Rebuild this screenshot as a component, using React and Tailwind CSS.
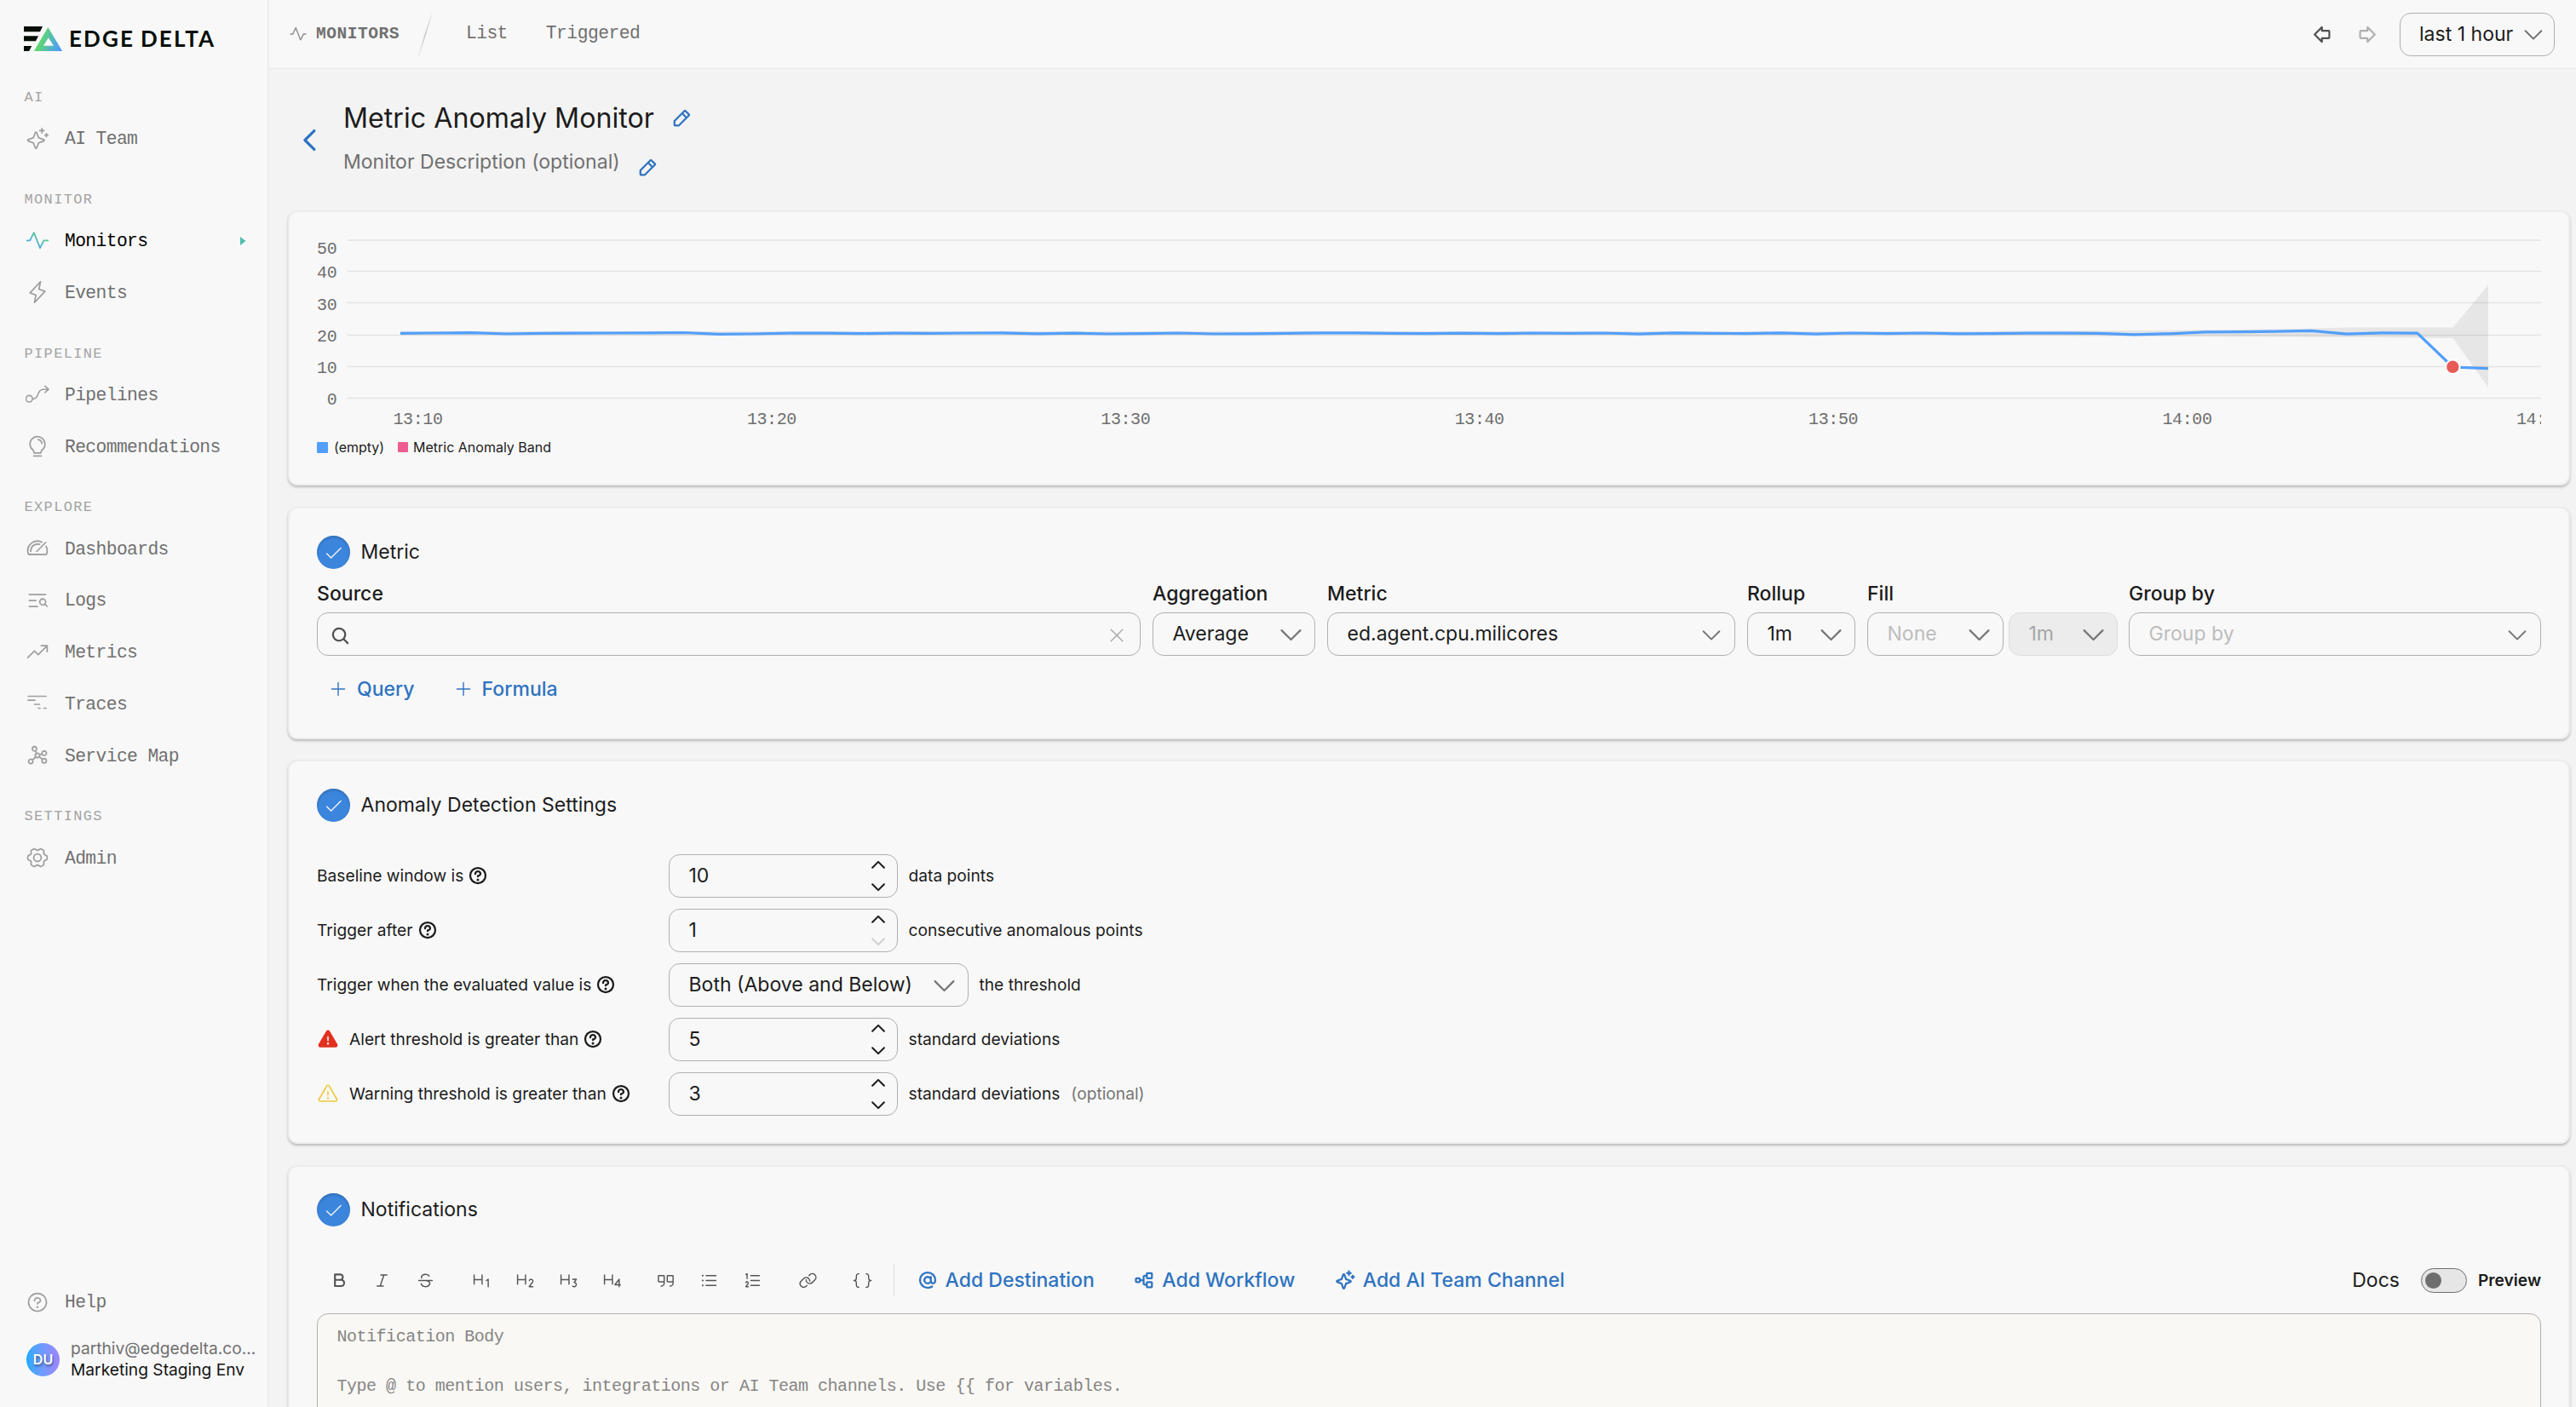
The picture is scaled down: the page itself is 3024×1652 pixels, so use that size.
import {
  PiArrowFatLeftBold,
  PiArrowFatRightBold,
  PiAtBold,
  PiBracketsCurly,
  PiCaretDown,
  PiCaretDownBold,
  PiCaretLeftBold,
  PiCaretUpBold,
  PiCheck,
  PiGearSix,
  PiGraph,
  PiLightbulb,
  PiLightning,
  PiLink,
  PiListBullets,
  PiListMagnifyingGlass,
  PiListNumbers,
  PiMagnifyingGlassBold,
  PiPencilSimpleBold,
  PiPlus,
  PiPulse,
  PiQuestion,
  PiQuestionBold,
  PiQuotes,
  PiSparkle,
  PiSparkleBold,
  PiSpeedometer,
  PiTextBBold,
  PiTextHFour,
  PiTextHOne,
  PiTextHThree,
  PiTextHTwo,
  PiTextItalic,
  PiTextStrikethrough,
  PiTreeStructureBold,
  PiTrendUp,
  PiWarning,
  PiWarningFill,
  PiX,
} from "react-icons/pi";

function PipelineIcon({ size, className }) {
  return (
    <svg
      width={size}
      height={size}
      viewBox="0 0 28 28"
      fill="none"
      stroke="currentColor"
      strokeWidth="1.6"
      strokeLinecap="round"
      strokeLinejoin="round"
      className={className}
    >
      <circle cx="4.3" cy="19.2" r="3.8" />
      <path d="M8.1 19.2h1.4c6.5 0 3.5-11 11-11h6" />
      <path d="m22.8 4.4 4.2 3.8-4.2 3.8" />
    </svg>
  );
}

function TracesIcon({ size, className }) {
  return (
    <svg
      width={size}
      height={size}
      viewBox="0 0 28 28"
      fill="none"
      stroke="currentColor"
      strokeWidth="1.7"
      strokeLinecap="round"
      className={className}
    >
      <path d="M3 5.5h21M3 10.2h8M10.5 15h6M15 19.5h2M21.5 19.5h2.5" />
    </svg>
  );
}

const NAV = [
  { title: "AI", items: [{ label: "AI Team", icon: PiSparkle }] },
  {
    title: "MONITOR",
    items: [
      { label: "Monitors", icon: PiPulse, active: true },
      { label: "Events", icon: PiLightning },
    ],
  },
  {
    title: "PIPELINE",
    items: [
      { label: "Pipelines", icon: PipelineIcon },
      { label: "Recommendations", icon: PiLightbulb },
    ],
  },
  {
    title: "EXPLORE",
    items: [
      { label: "Dashboards", icon: PiSpeedometer },
      { label: "Logs", icon: PiListMagnifyingGlass },
      { label: "Metrics", icon: PiTrendUp },
      { label: "Traces", icon: TracesIcon },
      { label: "Service Map", icon: PiGraph },
    ],
  },
  { title: "SETTINGS", items: [{ label: "Admin", icon: PiGearSix }] },
];

function Logo() {
  return (
    <div className="flex items-center h-[30px] pl-7 mt-[30px]">
      <svg width="45" height="29" viewBox="0 0 45 29">
        <defs>
          <linearGradient id="logo" x1="0" y1="0.7" x2="1" y2="1">
            <stop offset="0.1" stopColor="#5fdc68" />
            <stop offset="0.9" stopColor="#4a9bff" />
          </linearGradient>
        </defs>
        <path
          d="M0 0h22l-3 6.3H0zM0 11.3h17l-3 6H0zM0 23h9.2L6.2 29H0z"
          fill="#050f08"
        />
        <path
          d="M28.4 1 45.2 29H11.8zM28.8 13.2 23 22.8h12z"
          fill="url(#logo)"
          fillRule="evenodd"
        />
      </svg>
      <div className="flex gap-[7px] pl-2 font-['Lato',sans-serif] font-bold text-[26px] leading-none tracking-[2.1px] text-[#050f08]">
        <span>EDGE</span>
        <span>DELTA</span>
      </div>
    </div>
  );
}

function NavItem({ label, icon: Icon, active }) {
  return (
    <div className="flex items-center h-[60.75px] pl-[30px]">
      {active ? (
        <svg width="28" height="28" viewBox="0 0 28 28" fill="none">
          <defs>
            <linearGradient id="pulse" x1="0" y1="1" x2="1" y2="0">
              <stop offset="0.2" stopColor="#4aa6f0" />
              <stop offset="0.8" stopColor="#58cf86" />
            </linearGradient>
          </defs>
          <path
            d="M1.8 13.4h3.4l4.6-9.2 7.2 18 4.4-8.8h4.8"
            stroke="url(#pulse)"
            strokeWidth="1.8"
            strokeLinecap="round"
            strokeLinejoin="round"
          />
        </svg>
      ) : (
        <Icon size={28} className="text-[#9e9e9e]" />
      )}
      <span
        className={`pl-[18px] pt-[3px] flex-1 text-[21.3px] tracking-[-0.6px] ${
          active ? "text-black" : "text-[#707070]"
        }`}
      >
        {label}
      </span>
      {active && (
        <svg width="7" height="10" viewBox="0 0 7 10" className="mr-[25px]">
          <path d="M0 0 6.5 5 0 10z" fill="#4fbfae" />
        </svg>
      )}
    </div>
  );
}

function Sidebar() {
  return (
    <aside className="w-[316px] shrink-0 flex flex-col border-r-2 border-[#ececec] font-['Liberation_Mono',monospace]">
      <Logo />
      <nav className="mt-[13px]">
        {NAV.map((group) => (
          <div key={group.title}>
            <div className="h-[59.25px] pt-[24px] pl-[28.5px] flex items-center text-[17px] tracking-[1.35px] text-[#a3a3a3]">
              {group.title}
            </div>
            {group.items.map((item) => (
              <NavItem key={item.label} {...item} />
            ))}
          </div>
        ))}
      </nav>
      <div className="mt-auto">
        <NavItem label="Help" icon={PiQuestion} />
        <div className="flex items-center gap-[13px] pl-[31px] h-[52px] mt-[11px] mb-[30px] font-['Inter',sans-serif]">
          <div className="size-[39px] rounded-full bg-linear-to-r from-[#0fabff] to-[#9a86ff] flex items-center justify-center text-white text-[16px] font-semibold [text-shadow:1px_2px_3px_rgba(0,0,0,0.45)]">
            DU
          </div>
          <div className="text-[19.2px] leading-[25px]">
            <div className="text-[#707070]">parthiv@edgedelta.co...</div>
            <div className="text-[#141414]">Marketing Staging Env</div>
          </div>
        </div>
      </div>
    </aside>
  );
}

function Header() {
  return (
    <header className="h-[81px] shrink-0 flex items-center border-b border-[#e9e9e9] bg-[#f8f8f8] pl-[23px] pr-[26px] font-['Liberation_Mono',monospace] text-[#707070]">
      <PiPulse size={22} className="text-[#8a8a8a]" />
      <span className="pl-[10px] pt-[2px] text-[19.6px] font-bold tracking-[0.5px]">
        MONITORS
      </span>
      <svg width="20" height="54" viewBox="0 0 20 54" className="ml-[20px]">
        <defs>
          <linearGradient id="slash" x1="0" y1="0" x2="0" y2="1">
            <stop offset="0" stopColor="#c4c4c4" stopOpacity="0.1" />
            <stop offset="0.5" stopColor="#c4c4c4" />
            <stop offset="1" stopColor="#c4c4c4" stopOpacity="0.1" />
          </linearGradient>
        </defs>
        <path d="M17.5 2h1.6L3.1 53H1.5z" fill="url(#slash)" />
      </svg>
      <span className="pl-[38px] text-[21.3px] tracking-[-0.6px]">List</span>
      <span className="pl-[45px] text-[21.3px] tracking-[-0.5px]">
        Triggered
      </span>
      <div className="ml-auto flex items-center">
        <PiArrowFatLeftBold size={23} className="text-[#505050]" />
        <PiArrowFatRightBold size={23} className="ml-[29px] text-[#b0b0b0]" />
        <div className="ml-[27px] w-[182px] h-[51px] rounded-[13px] border border-[#b0b0b0] flex items-center justify-between pl-[22px] pr-[9px] font-['Inter',sans-serif]">
          <span className="text-[23.04px] text-[#1c1c1c]">last 1 hour</span>
          <PiCaretDown size={30} />
        </div>
      </div>
    </header>
  );
}

function Card({ className, children }) {
  return (
    <section
      className={`shrink-0 rounded-[11px] border-2 border-[#ededed] bg-[#f8f8f8] px-8 shadow-[0_2px_3px_rgba(0,0,0,0.24)] ${className}`}
    >
      {children}
    </section>
  );
}

const Y_TICKS = [
  { value: 50, y: 16, label: 25.5 },
  { value: 40, y: 52.5, label: 53.5 },
  { value: 30, y: 89.5, label: 90.7 },
  { value: 20, y: 127.5, label: 128.4 },
  { value: 10, y: 164.5, label: 165.3 },
  { value: 0, y: 201.5, label: 202.5 },
];

const X_TICKS = ["13:10", "13:20", "13:30", "13:40", "13:50", "14:00", "14:10"];

// one point per minute, starting at 13:09:30
const SERIES = [
  125.3, 125, 124.7, 126, 125.4, 125.2, 125, 124.8, 124.5, 126.4, 126, 125.1,
  125.2, 125.6, 125.2, 125.4, 125, 124.9, 125.8, 125.2, 126, 125.6, 125, 126,
  125.8, 125.4, 124.8, 124.9, 125.4, 125.7, 125.2, 125.7, 125, 125.4, 125,
  126.2, 124.8, 125.3, 125.6, 124.9, 126.2, 125, 125.7, 125, 125.8, 125.6,
  125.1, 125.2, 125.3, 126.8, 125.8, 123.9, 123.7, 123.1, 122.4, 126.2, 124.9,
  125.2, 165, 166.7,
];

function Chart() {
  const px = (i) => 98 + i * 41.54;
  const line = SERIES.map((y, i) => `${px(i)},${y}`).join(" ");
  return (
    <svg
      width="2611"
      height="240"
      viewBox="0 0 2611 240"
      className="block font-['Liberation_Mono',monospace] text-[20px] tracking-[-0.4px]"
    >
      {Y_TICKS.map((tick) => (
        <g key={tick.value}>
          <path d={`M35.5 ${tick.y}H2611`} stroke="#e4e4e4" strokeWidth="1.6" />
          <text x="23.3" y={tick.label + 6.8} textAnchor="end" fill="#6e6e6e">
            {tick.value}
          </text>
        </g>
      ))}
      {X_TICKS.map((label, i) => (
        <text
          key={label}
          x={118.5 + i * 415.4}
          y="232"
          textAnchor="middle"
          fill="#6e6e6e"
        >
          {label}
        </text>
      ))}
      <path
        d="M98 123 1900 123 2130 122 2300 120.5 2383 118.6 2507.5 118.4 2549 68.5V189L2507.5 131 2383 130 2130 128.7 1900 127.5 98 127.5z"
        fill="#000"
        fillOpacity="0.07"
      />
      <polyline
        points={line}
        fill="none"
        stroke="#529ffb"
        strokeWidth="3.2"
        strokeLinejoin="round"
      />
      <circle
        cx={px(58)}
        cy="164.8"
        r="8.2"
        fill="#e95b56"
        stroke="#fff"
        strokeWidth="2"
      />
    </svg>
  );
}

function ChartCard() {
  return (
    <Card className="h-[323px] pt-[17px]">
      <Chart />
      <div className="flex items-center text-[16px] leading-[20px] mt-[9px]">
        <span className="size-[13px] rounded-[1px] bg-[#529ffb]" />
        <span className="pl-[7px] w-[82px]">(empty)</span>
        <span className="size-[12px] rounded-[1px] bg-[#ee5d92]" />
        <span className="pl-[6px]">Metric Anomaly Band</span>
      </div>
    </Card>
  );
}

function SectionTitle({ children }) {
  return (
    <div className="flex items-center gap-[12.5px] h-[39px] text-[23.04px]">
      <span className="size-[39px] rounded-full bg-[#3b85dc] shadow-[inset_0_2px_3px_rgba(0,0,0,0.18)] flex items-center justify-center text-[#f2f2f2]">
        <PiCheck size={23} />
      </span>
      {children}
    </div>
  );
}

function Select({ value, placeholder, disabled, caret = 35, className }) {
  return (
    <div
      className={`h-[51px] rounded-[13px] border flex items-center justify-between pl-[22.5px] text-[23.04px] ${
        caret === 35 ? "pr-[10px]" : "pr-[12px]"
      } ${
        disabled
          ? "border-[#dedede] bg-[#ececec] text-[#a6a6a6]"
          : "border-[#b0b0b0]"
      } ${className}`}
    >
      {value || <span className="text-[#bdbdbd]">{placeholder}</span>}
      <PiCaretDown size={caret} className="text-[#757575]" />
    </div>
  );
}

function Field({ label, className, children }) {
  return (
    <div className={className}>
      <div className="text-[23.04px] leading-[28px] font-medium mb-[8px]">
        {label}
      </div>
      {children}
    </div>
  );
}

function AddButton({ className, children }) {
  return (
    <button
      className={`flex items-center gap-[11px] text-[23.04px] leading-[34px] font-medium text-[#2f73c0] ${className}`}
    >
      <PiPlus size={22} />
      {children}
    </button>
  );
}

function MetricCard() {
  return (
    <Card className="mt-[25px] h-[273px] pt-[32px]">
      <SectionTitle>Metric</SectionTitle>
      <div className="flex gap-[14px] mt-[15px]">
        <Field label="Source" className="w-[967px]">
          <div className="h-[51px] rounded-[13px] border border-[#b0b0b0] flex items-center justify-between pl-[15px] pr-[15px]">
            <PiMagnifyingGlassBold size={23} className="text-[#505050] mt-[3px]" />
            <PiX size={24} className="text-[#ababab] mt-[3px]" />
          </div>
        </Field>
        <Field label="Aggregation" className="w-[191px]">
          <Select value="Average" />
        </Field>
        <Field label="Metric" className="w-[479px]">
          <Select value="ed.agent.cpu.milicores" caret={30} />
        </Field>
        <Field label="Rollup" className="w-[127px]">
          <Select value="1m" />
        </Field>
        <Field label="Fill">
          <div className="flex gap-[6px]">
            <Select placeholder="None" className="w-[160px]" />
            <Select value="1m" disabled className="w-[128px]" />
          </div>
        </Field>
        <Field label="Group by" className="flex-1 -ml-px">
          <Select placeholder="Group by" caret={30} />
        </Field>
      </div>
      <div className="flex mt-[22px] pl-[14px]">
        <AddButton>Query</AddButton>
        <AddButton className="ml-[46px]">Formula</AddButton>
      </div>
    </Card>
  );
}

function Stepper({ value, atMin }) {
  return (
    <div className="w-[269px] h-[51px] rounded-[13px] border border-[#b0b0b0] flex items-center justify-between pl-[22.5px] pr-[11px] text-[23.04px]">
      {value}
      <div className="flex flex-col gap-[3px]">
        <PiCaretUpBold size={22} />
        <PiCaretDownBold size={22} className={atMin ? "text-[#cfcfcf]" : ""} />
      </div>
    </div>
  );
}

const SETTINGS = [
  { label: "Baseline window is", value: "10", unit: "data points" },
  {
    label: "Trigger after",
    value: "1",
    atMin: true,
    unit: "consecutive anomalous points",
  },
  {
    label: "Trigger when the evaluated value is",
    select: "Both (Above and Below)",
    unit: "the threshold",
  },
  {
    label: "Alert threshold is greater than",
    icon: <PiWarningFill size={26} className="text-[#e2311f]" />,
    value: "5",
    unit: "standard deviations",
  },
  {
    label: "Warning threshold is greater than",
    icon: <PiWarning size={26} className="text-[#ecc93c]" />,
    value: "3",
    unit: "standard deviations",
    optional: true,
  },
];

function AnomalyCard() {
  return (
    <Card className="mt-[24px] h-[451px] pt-[32px]">
      <SectionTitle>Anomaly Detection Settings</SectionTitle>
      <div className="flex flex-col gap-[13px] mt-[38px] text-[19.2px]">
        {SETTINGS.map((row) => (
          <div key={row.label} className="flex items-center h-[51px]">
            <div className="w-[413px] flex items-center">
              {row.icon && <span className="w-[38px]">{row.icon}</span>}
              {row.label}
              <PiQuestionBold size={24} className="ml-[5px]" />
            </div>
            {row.select ? (
              <Select value={row.select} className="w-[352px]" />
            ) : (
              <Stepper value={row.value} atMin={row.atMin} />
            )}
            <span className="pl-[12.5px]">{row.unit}</span>
            {row.optional && (
              <span className="pl-[13px] text-[#757575]">(optional)</span>
            )}
          </div>
        ))}
      </div>
    </Card>
  );
}

const TOOLS = [
  [PiTextBBold, PiTextItalic, PiTextStrikethrough],
  [PiTextHOne, PiTextHTwo, PiTextHThree, PiTextHFour],
  [PiQuotes, PiListBullets, PiListNumbers],
  [PiLink],
  [PiBracketsCurly],
];

const ACTIONS = [
  { label: "Add Destination", icon: PiAtBold },
  { label: "Add Workflow", icon: PiTreeStructureBold },
  { label: "Add AI Team Channel", icon: PiSparkleBold },
];

function NotificationsCard() {
  return (
    <Card className="mt-[25px] h-[400px] pt-[31px]">
      <SectionTitle>Notifications</SectionTitle>
      <div className="flex items-center h-[38px] mt-[44px]">
        <div className="flex gap-[13.5px] text-[#555]">
          {TOOLS.map((group, i) => (
            <div key={i} className="flex">
              {group.map((Icon, j) => (
                <span key={j} className="w-[51px] flex justify-center">
                  <Icon size={23} />
                </span>
              ))}
            </div>
          ))}
        </div>
        <div className="w-px h-[38px] ml-[11px] bg-[#dedede]" />
        <div className="flex gap-[47px] pl-[27px] text-[23.04px] font-medium text-[#2f73c0]">
          {ACTIONS.map(({ label, icon: Icon }) => (
            <button key={label} className="flex items-center gap-[8.5px]">
              <Icon size={24} />
              {label}
            </button>
          ))}
        </div>
        <div className="ml-auto flex items-center">
          <span className="text-[23.04px]">Docs</span>
          <span className="ml-[25px] w-[54px] h-[29px] rounded-full border border-[#6e6e6e] bg-[#e6e6e6] flex items-center pl-[4px]">
            <span className="size-[19px] rounded-full bg-[#6e6e6e]" />
          </span>
          <span className="pl-[13px] text-[19.2px] font-semibold">Preview</span>
        </div>
      </div>
      <div className="mt-[20px] h-[260px] rounded-t-[13px] border border-[#b0b0b0] bg-[#faf8f4] pl-[22.5px] pt-[12px] font-['Liberation_Mono',monospace] text-[20px] tracking-[-0.48px] leading-[29px] text-[#858585]">
        <p>Notification Body</p>
        <p className="mt-[29px]">
          {"Type @ to mention users, integrations or AI Team channels. Use {{ for variables."}
        </p>
      </div>
    </Card>
  );
}

export default function App() {
  return (
    <div className="flex w-[3024px] h-[1652px] overflow-hidden bg-[#f8f8f8] font-['Inter',sans-serif] text-[#1c1c1c]">
      <Sidebar />
      <div className="flex-1 flex flex-col bg-[#f3f3f3]">
        <Header />
        <main className="flex-1 flex flex-col pl-[22px] pr-2">
          <div className="h-[166px] shrink-0 flex pl-[9px]">
            <PiCaretLeftBold size={35} className="mt-[66px] text-[#2f73c0]" />
            <div className="pl-[21px] pt-[38px]">
              <div className="flex items-center text-[32.2px] leading-[40px]">
                Metric Anomaly Monitor
                <PiPencilSimpleBold size={24} className="ml-[20px] text-[#2f73c0]" />
              </div>
              <div className="flex items-center text-[23.04px] leading-[40px] mt-[11px] text-[#707070]">
                Monitor Description (optional)
                <PiPencilSimpleBold
                  size={24}
                  className="ml-[20px] mt-[13px] text-[#2f73c0]"
                />
              </div>
            </div>
          </div>
          <ChartCard />
          <MetricCard />
          <AnomalyCard />
          <NotificationsCard />
        </main>
      </div>
    </div>
  );
}
